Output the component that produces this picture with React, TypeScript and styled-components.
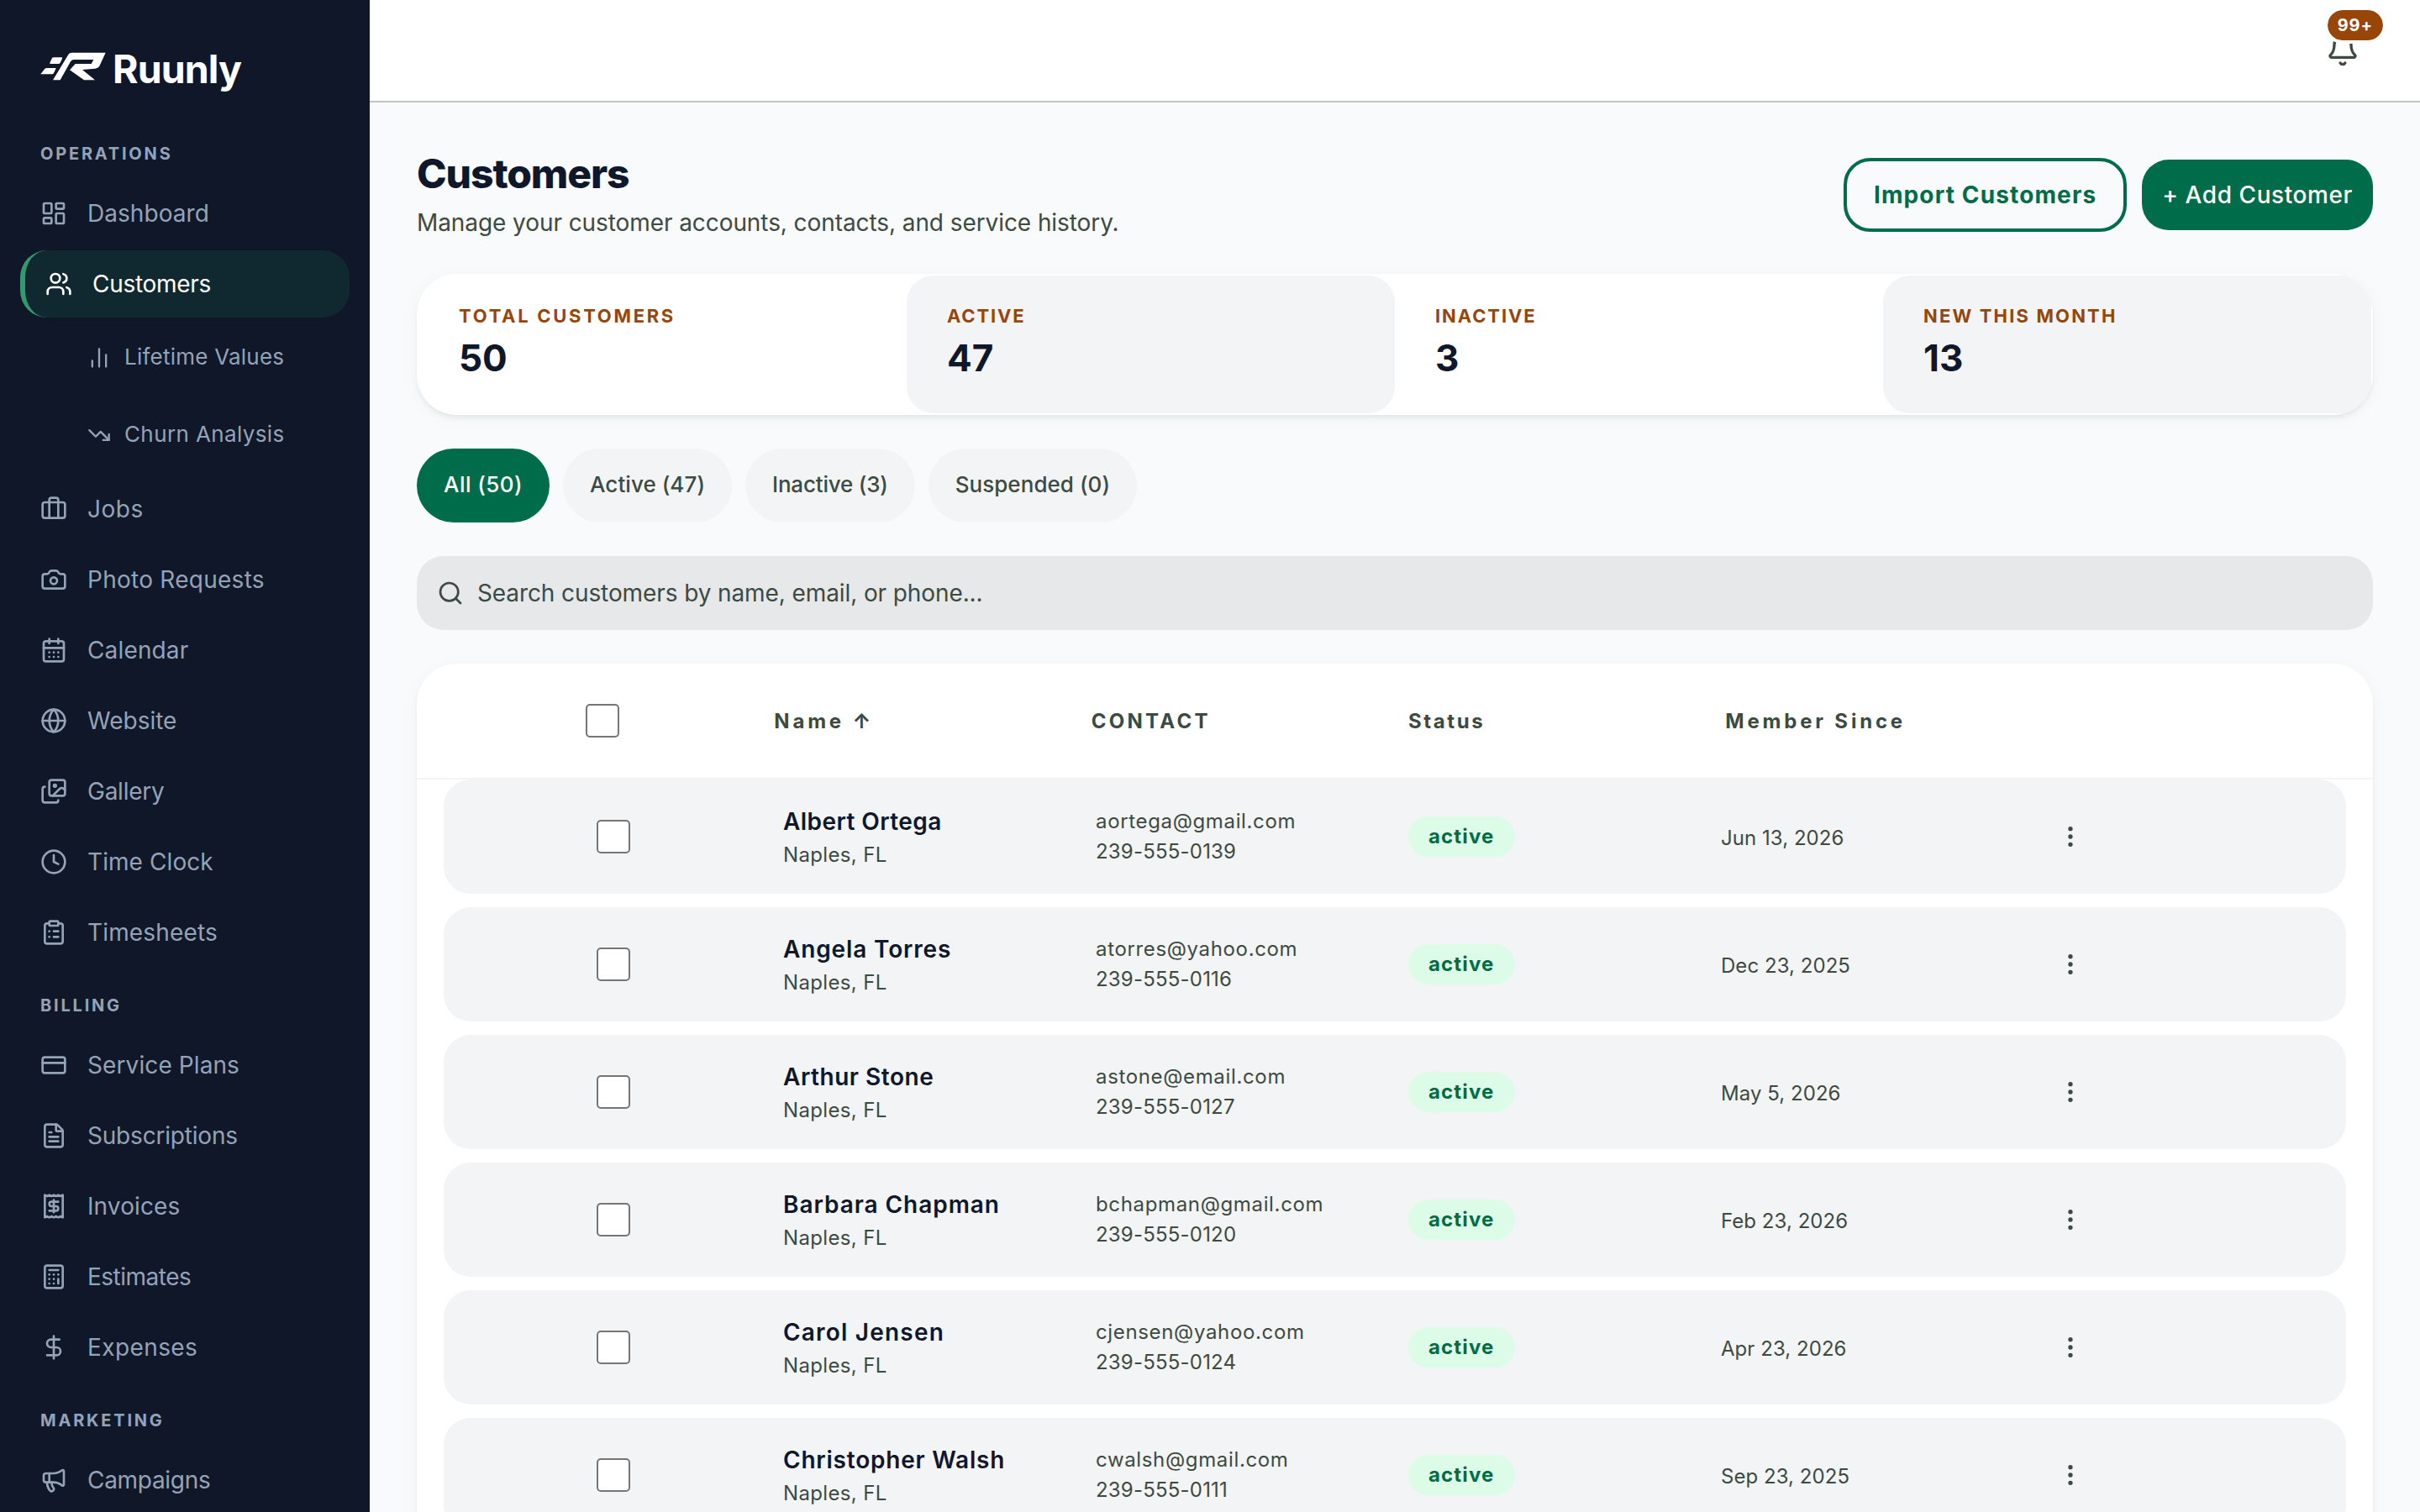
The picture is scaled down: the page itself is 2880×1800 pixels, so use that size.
import { useState } from "react";
import styled, { createGlobalStyle } from "styled-components";
import {
  Bell,
  Briefcase,
  Calculator,
  CalendarDays,
  Camera,
  ChartNoAxesColumn,
  ClipboardList,
  Clock,
  CreditCard,
  DollarSign,
  EllipsisVertical,
  FileText,
  Globe,
  Images,
  LayoutDashboard,
  Megaphone,
  Receipt,
  Search,
  TrendingDown,
  Users,
} from "lucide-react";

const NavSections = [
  {
    title: "Operations",
    items: [
      { label: "Dashboard", icon: LayoutDashboard, tracking: 0.05 },
      {
        label: "Customers",
        icon: Users,
        tracking: -0.3,
        children: [
          { label: "Lifetime Values", icon: ChartNoAxesColumn, tracking: 0.23 },
          { label: "Churn Analysis", icon: TrendingDown, tracking: 0.38 },
        ],
      },
      { label: "Jobs", icon: Briefcase, tracking: 0.5 },
      { label: "Photo Requests", icon: Camera, tracking: 0.26 },
      { label: "Calendar", icon: CalendarDays, tracking: 0.15 },
      { label: "Website", icon: Globe, tracking: 0 },
      { label: "Gallery", icon: Images, tracking: -0.25 },
      { label: "Time Clock", icon: Clock, tracking: 0.08 },
      { label: "Timesheets", icon: ClipboardList, tracking: 0.15 },
    ],
  },
  {
    title: "Billing",
    items: [
      { label: "Service Plans", icon: CreditCard, tracking: 0.1 },
      { label: "Subscriptions", icon: FileText, tracking: -0.2 },
      { label: "Invoices", icon: Receipt, tracking: 0.1 },
      { label: "Estimates", icon: Calculator, tracking: -0.5 },
      { label: "Expenses", icon: DollarSign, tracking: 0.4 },
    ],
  },
  {
    title: "Marketing",
    items: [{ label: "Campaigns", icon: Megaphone, tracking: -0.3 }],
  },
];

const Stats = [
  { label: "Total Customers", value: 50, tracking: 2.7 },
  { label: "Active", value: 47, tracking: 1.85 },
  { label: "Inactive", value: 3, tracking: 1.9 },
  { label: "New This Month", value: 13, tracking: 2.15 },
];

const Filters = [
  { label: "All (50)", tracking: 0.45 },
  { label: "Active (47)", tracking: 0.05 },
  { label: "Inactive (3)", tracking: -0.2 },
  { label: "Suspended (0)", tracking: 0.05 },
];

const Columns = [
  { label: "Name ↑", tracking: 3.8 },
  { label: "CONTACT", tracking: 3.3 },
  { label: "Status", tracking: 2.6 },
  { label: "Member Since", tracking: 3.8 },
];

const Customers = [
  { name: "Albert Ortega", email: "aortega@gmail.com", phone: "239-555-0139", since: "Jun 13, 2026", tracking: 0.42 },
  { name: "Angela Torres", email: "atorres@yahoo.com", phone: "239-555-0116", since: "Dec 23, 2025", tracking: 0.85 },
  { name: "Arthur Stone", email: "astone@email.com", phone: "239-555-0127", since: "May 5, 2026", tracking: 0.53 },
  { name: "Barbara Chapman", email: "bchapman@gmail.com", phone: "239-555-0120", since: "Feb 23, 2026", tracking: 0.95 },
  { name: "Carol Jensen", email: "cjensen@yahoo.com", phone: "239-555-0124", since: "Apr 23, 2026", tracking: 1.2 },
  { name: "Christopher Walsh", email: "cwalsh@gmail.com", phone: "239-555-0111", since: "Sep 23, 2025", tracking: 0.78 },
];

const Logo = () => (
  <LogoWrapper>
    <svg width="90" height="56" viewBox="0 0 270 168" fill="#fff">
      <path d="M60 37h28q4 0 2 4l-7 15q-2 4-6 4H49q-5 0-3-4l7-15q2-4 7-4z" />
      <path d="M35 75h30q4 0 2 4l-7 14q-2 4-6 4H13l14-18q3-4 8-4z" />
      <path d="M57 118 112 27q4-7 12-7h121l-21 46q-5 10-17 11l-45 4 45 37h-39l-51-36 20-22h57l8-15h-70q-8 0-12 7l-37 66z" />
    </svg>
    <span>Ruunly</span>
  </LogoWrapper>
);

const Sidebar = () => {
  const [current, setCurrent] = useState<string>("Customers");

  return (
    <SidebarWrapper>
      <Logo />
      {NavSections.map((section) => (
        <NavSection key={section.title}>
          <h4>{section.title}</h4>
          {section.items.map((item: any) => (
            <NavGroup key={item.label}>
              <NavItem
                $active={current === item.label}
                $tracking={item.tracking}
                onClick={() => setCurrent(item.label)}
              >
                <item.icon size={32} />
                {item.label}
              </NavItem>
              {item.children?.map((child: any) => (
                <NavSubItem key={child.label} $tracking={child.tracking}>
                  <child.icon size={28} />
                  <span>{child.label}</span>
                </NavSubItem>
              ))}
            </NavGroup>
          ))}
        </NavSection>
      ))}
    </SidebarWrapper>
  );
};

const CustomerTable = () => (
  <TableCard>
    <TableHeader>
      <CheckCell>
        <Checkbox type="checkbox" />
      </CheckCell>
      {Columns.map((column) => (
        <ColumnTitle key={column.label} $tracking={column.tracking}>
          {column.label}
        </ColumnTitle>
      ))}
    </TableHeader>
    <TableBody>
      {Customers.map((customer) => (
        <TableRow key={customer.email}>
          <CheckCell>
            <Checkbox type="checkbox" />
          </CheckCell>
          <NameCell $tracking={customer.tracking}>
            <strong>{customer.name}</strong>
            <span>Naples, FL</span>
          </NameCell>
          <ContactCell>
            <Email>{customer.email}</Email>
            <Phone>{customer.phone}</Phone>
          </ContactCell>
          <StatusCell>
            <StatusBadge>active</StatusBadge>
          </StatusCell>
          <DateCell>{customer.since}</DateCell>
          <MenuButton>
            <EllipsisVertical size={32} />
          </MenuButton>
        </TableRow>
      ))}
    </TableBody>
  </TableCard>
);

const App = () => {
  const [filter, setFilter] = useState<string>(Filters[0].label);

  return (
    <Screen>
      <GlobalStyle />
      <Sidebar />
      <Main>
        <TopBar>
          <BellButton>
            <Bell size={40} />
            <BellCount>99+</BellCount>
          </BellButton>
        </TopBar>
        <Content>
          <PageHeader>
            <div>
              <h1>Customers</h1>
              <p>Manage your customer accounts, contacts, and service history.</p>
            </div>
            <Actions>
              <OutlineButton>Import Customers</OutlineButton>
              <PrimaryButton>+ Add Customer</PrimaryButton>
            </Actions>
          </PageHeader>
          <StatsCard>
            {Stats.map((stat, index) => (
              <Stat
                key={stat.label}
                $shaded={index % 2 === 1}
                $tracking={stat.tracking}
              >
                <h3>{stat.label}</h3>
                <p>{stat.value}</p>
              </Stat>
            ))}
          </StatsCard>
          <FilterTabs>
            {Filters.map(({ label, tracking }) => (
              <FilterTab
                key={label}
                $active={filter === label}
                $tracking={tracking}
                onClick={() => setFilter(label)}
              >
                {label}
              </FilterTab>
            ))}
          </FilterTabs>
          <SearchBar>
            <Search size={32} />
            <input placeholder="Search customers by name, email, or phone..." />
          </SearchBar>
          <CustomerTable />
        </Content>
      </Main>
    </Screen>
  );
};

export default App;

const GlobalStyle = createGlobalStyle`
  * {
    box-sizing: border-box;
  }

  body {
    margin: 0;
    background: #f8fafb;
  }

  h1, h3, h4, p {
    margin: 0;
  }

  button, input {
    font-family: inherit;
    color: inherit;
  }

  button {
    background: none;
    border: none;
    cursor: pointer;
    white-space: nowrap;
  }
`;

const Screen = styled.div`
  display: flex;
  width: 2880px;
  height: 1800px;
  overflow: hidden;
  font-family: Inter, sans-serif;
  font-size: 28px;
  color: #3d4a42;
  background: #f8fafb;
`;

const SidebarWrapper = styled.nav`
  flex: none;
  width: 440px;
  height: 1800px;
  padding: 0 24px;
  overflow: hidden;
  background: #101728;
`;

const LogoWrapper = styled.div`
  display: flex;
  align-items: flex-start;
  height: 136px;
  padding: 56px 0 0 20px;

  span {
    font-size: 46.5px;
    font-weight: 700;
    line-height: 56px;
    letter-spacing: -0.9px;
    color: #fff;
    margin-top: -2px;
  }
`;

const NavSection = styled.section`
  display: flex;
  flex-direction: column;
  gap: 4px;
  padding-top: 32px;

  h4 {
    font-size: 20px;
    font-weight: 700;
    line-height: 30px;
    letter-spacing: 2.8px;
    text-transform: uppercase;
    color: #94a3b8;
    padding: 0 24px;
    margin-bottom: 12px;
  }
`;

const NavGroup = styled.div`
  display: flex;
  flex-direction: column;
  gap: 4px;
`;

const NavItem = styled.button<{ $active: boolean; $tracking: number }>`
  display: flex;
  align-items: center;
  gap: 24px;
  height: 80px;
  padding: 0 24px;
  border-radius: 32px;
  border-left: ${(props) => (props.$active ? "6px solid #34996f" : "none")};
  font-size: 28px;
  letter-spacing: ${(props) => props.$tracking}px;
  color: ${(props) => (props.$active ? "#fff" : "#94a3b8")};
  background: ${(props) => (props.$active ? "#102830" : "transparent")};
`;

const NavSubItem = styled.button<{ $tracking: number }>`
  display: flex;
  align-items: center;
  gap: 16px;
  height: 88px;
  padding: 0 24px 0 80px;
  font-size: 26px;
  letter-spacing: ${(props) => props.$tracking}px;
  color: #94a3b8;

  span {
    padding-bottom: 3px;
  }
`;

const Main = styled.main`
  flex: 1;
  min-width: 0;
`;

const TopBar = styled.header`
  display: flex;
  align-items: center;
  justify-content: flex-end;
  height: 122px;
  padding: 0 48px;
  background: #fff;
  border-bottom: 2px solid #bdc7bf;
`;

const BellButton = styled.button`
  position: relative;
  display: flex;
  align-items: center;
  justify-content: center;
  width: 88px;
  height: 88px;
  padding: 0;
`;

const BellCount = styled.span`
  position: absolute;
  top: -8px;
  right: -8px;
  height: 44px;
  padding: 0 12px;
  border: 4px solid #fff;
  border-radius: 22px;
  font-size: 20px;
  font-weight: 700;
  line-height: 37px;
  letter-spacing: 0.9px;
  color: #fff;
  background: #984508;
  background-clip: padding-box;
`;

const Content = styled.div`
  display: flex;
  flex-direction: column;
  gap: 40px;
  padding: 56px;
`;

const PageHeader = styled.div`
  display: flex;
  align-items: center;
  justify-content: space-between;
  height: 108px;

  h1 {
    font-size: 48px;
    font-weight: 800;
    line-height: 60px;
    letter-spacing: -1.1px;
    color: #0f172a;
  }

  p {
    font-size: 28px;
    line-height: 44px;
    letter-spacing: -0.08px;
    margin-top: 6px;
  }
`;

const Actions = styled.div`
  display: flex;
  align-items: center;
  gap: 18px;
`;

const OutlineButton = styled.button`
  height: 88px;
  padding: 0 32px;
  border: 4px solid #006c49;
  border-radius: 32px;
  font-size: 28px;
  font-weight: 700;
  letter-spacing: 1.12px;
  color: #006c49;
`;

const PrimaryButton = styled.button`
  height: 84px;
  padding: 0 24px;
  border-radius: 32px;
  font-size: 28px;
  font-weight: 500;
  letter-spacing: 0.58px;
  color: #fff;
  background: #006c49;
`;

const cardShadow = `
  0 4px 4px rgba(0, 108, 73, 0.06),
  0 4px 20px rgba(0, 0, 0, 0.04)
`;

const StatsCard = styled.section`
  display: grid;
  grid-template-columns: repeat(4, 1fr);
  height: 168px;
  padding: 2px;
  border-radius: 48px;
  overflow: hidden;
  background: #fff;
  box-shadow: ${cardShadow};
`;

const Stat = styled.div<{ $shaded: boolean; $tracking: number }>`
  padding: 32px 48px;
  border-radius: 32px;
  background: ${(props) => (props.$shaded ? "#f3f4f6" : "transparent")};

  h3 {
    font-size: 22px;
    font-weight: 700;
    line-height: 32px;
    letter-spacing: ${(props) => props.$tracking}px;
    text-transform: uppercase;
    color: #984508;
  }

  p {
    font-size: 44px;
    font-weight: 700;
    line-height: 68px;
    color: #0f172a;
  }
`;

const FilterTabs = styled.div`
  display: flex;
  gap: 16px;
`;

const FilterTab = styled.button<{ $active: boolean; $tracking: number }>`
  height: 88px;
  padding: 0 32px 3px;
  border-radius: 44px;
  font-size: 26px;
  font-weight: 500;
  letter-spacing: ${(props) => props.$tracking}px;
  color: ${(props) => (props.$active ? "#fff" : "#3d4a42")};
  background: ${(props) => (props.$active ? "#006c49" : "#f3f4f6")};
`;

const SearchBar = styled.label`
  display: flex;
  align-items: center;
  gap: 16px;
  height: 88px;
  padding: 0 24px;
  border-radius: 32px;
  background: #e7e8e9;

  input {
    flex: 1;
    padding: 0;
    border: none;
    outline: none;
    font-size: 28px;
    letter-spacing: -0.1px;
    background: none;
  }

  input::placeholder {
    color: #3d4a42;
    opacity: 1;
  }
`;

const TableCard = styled.section`
  border-radius: 48px;
  background: #fff;
  box-shadow: ${cardShadow};
`;

const TableHeader = styled.div`
  display: grid;
  grid-template-columns: repeat(6, 1fr);
  align-items: center;
  gap: 32px;
  height: 138px;
  padding: 0 48px;
  border-bottom: 2px solid #f3f4f6;
`;

const ColumnTitle = styled.span<{ $tracking: number }>`
  font-size: 24px;
  font-weight: 700;
  letter-spacing: ${(props) => props.$tracking}px;
  white-space: nowrap;
`;

const TableBody = styled.div`
  display: flex;
  flex-direction: column;
  gap: 16px;
  padding: 0 32px 32px;
`;

const TableRow = styled.div`
  display: grid;
  grid-template-columns: repeat(6, 1fr);
  align-items: center;
  gap: 32px;
  height: 136px;
  padding: 0 32px;
  border-radius: 32px;
  font-size: 24px;
  background: #f3f4f6;
`;

const CheckCell = styled.div`
  display: flex;
  justify-content: center;
`;

const Checkbox = styled.input`
  appearance: none;
  width: 40px;
  height: 40px;
  margin: 0;
  border: 2px solid #767676;
  border-radius: 5px;
  background: #fff;
`;

const NameCell = styled.div<{ $tracking: number }>`
  display: flex;
  flex-direction: column;
  padding-top: 2px;

  strong {
    font-size: 28px;
    font-weight: 600;
    line-height: 42px;
    letter-spacing: ${(props) => props.$tracking}px;
    color: #0f172a;
  }

  span {
    line-height: 38px;
    letter-spacing: 0.35px;
  }
`;

const ContactCell = styled.div`
  display: flex;
  flex-direction: column;
  line-height: 36px;
`;

const Email = styled.span`
  letter-spacing: 0.65px;
`;

const Phone = styled.span`
  letter-spacing: 0.2px;
`;

const StatusCell = styled.div`
  display: flex;
`;

const StatusBadge = styled.span`
  height: 48px;
  padding: 0 24px;
  border-radius: 24px;
  font-size: 24px;
  font-weight: 700;
  line-height: 47px;
  letter-spacing: 1.15px;
  color: #006c49;
  background: #dcfce7;
`;

const DateCell = styled.div`
  line-height: 36px;
  letter-spacing: 0.05px;
  padding-top: 4px;
`;

const MenuButton = styled.button`
  display: flex;
  align-items: center;
  justify-content: center;
  width: 88px;
  height: 88px;
  padding: 0;
`;
